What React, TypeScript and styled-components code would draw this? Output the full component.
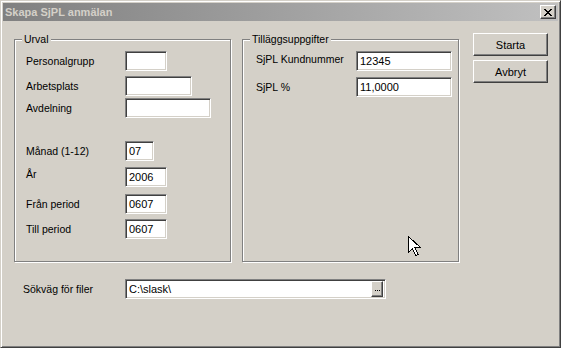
import React from 'react';
import styled, {createGlobalStyle} from "styled-components";

const GlobalStyle = createGlobalStyle`
    html, body {
        margin: 0;
        padding: 0;
        background: #d4d0c8;
    }
    * {
        box-sizing: border-box;
    }
`

type FieldType = {
    label: string
    value: string
    width: number
    top: number
    raise?: number
}

export default function App() {
    const urval: FieldType[] = [
        {label: 'Personalgrupp', value: '', width: 42, top: 0},
        {label: 'Arbetsplats', value: '', width: 67, top: 5},
        {label: 'Avdelning', value: '', width: 86, top: 2},
        {label: 'Månad (1-12)', value: '07', width: 29, top: 23},
        {label: 'År', value: '2006', width: 42, top: 6, raise: 3},
        {label: 'Från period', value: '0607', width: 42, top: 7},
        {label: 'Till period', value: '0607', width: 42, top: 5},
    ];

    const extra: FieldType[] = [
        {label: 'SjPL Kundnummer', value: '12345', width: 96, top: 0, raise: 2},
        {label: 'SjPL %', value: '11,0000', width: 96, top: 6},
    ];

    const renderFields = (fields: FieldType[], labelWidth: number) => fields.map(item => (
        <FieldRow key={item.label} $top={item.top} $labelWidth={labelWidth}>
            <FieldLabel $raise={item.raise || 0}>{item.label}</FieldLabel>
            <TextBox $width={item.width}>{item.value}</TextBox>
        </FieldRow>
    ));

    return (
        <>
            <GlobalStyle/>
            <Window>
                <TitleBar>
                    <TitleText>Skapa SjPL anmälan</TitleText>
                    <CloseButton>
                        <svg width="8" height="7" viewBox="0 0 8 7">
                            <path d="M0 0h2v1h1v1h2V1h1V0h2v1H7v1H6v1H5v1h1v1h1v1h1v1H6V6H5V5H3v1H2v1H0V6h1V5h1V4h1V3H2V2H1V1H0z"
                                  fill="#000"/>
                        </svg>
                    </CloseButton>
                </TitleBar>
                <Body>
                    <MainRow>
                        <GroupBox>
                            <Legend>Urval</Legend>
                            {renderFields(urval, 99)}
                        </GroupBox>
                        <GroupBox>
                            <Legend>Tilläggsuppgifter</Legend>
                            {renderFields(extra, 100)}
                        </GroupBox>
                        <ButtonColumn>
                            <PushButton>Starta</PushButton>
                            <PushButton>Avbryt</PushButton>
                        </ButtonColumn>
                    </MainRow>
                    <PathRow>
                        <PathLabel>Sökväg för filer</PathLabel>
                        <PathBox>
                            <PathText>C:\slask\</PathText>
                            <BrowseButton>
                                <Dot/><Dot/><Dot/>
                            </BrowseButton>
                        </PathBox>
                    </PathRow>
                </Body>
                <Cursor width="13" height="21" viewBox="0 0 13 21">
                    <path d="M0.5 0.5v16l4-4 3 7 2.5-1-3-7h5.5z" fill="#fff" stroke="#000" strokeWidth="1"
                          shapeRendering="crispEdges"/>
                </Cursor>
            </Window>
        </>
    );
}

const Window = styled.div`
    position: relative;
    width: 561px;
    height: 348px;
    background: #d4d0c8;
    border: 1px solid;
    border-color: #d4d0c8 #404040 #404040 #d4d0c8;
    box-shadow: inset 1px 1px 0 #fff, inset -1px -1px 0 #808080;
    padding: 2px;
    display: flex;
    flex-direction: column;
    font-family: "Liberation Sans", Arial, sans-serif;
    font-size: 10.5px;
    color: #000;
`

const TitleBar = styled.div`
    height: 18px;
    display: flex;
    align-items: center;
    justify-content: space-between;
    padding: 0 2px 0 2px;
    background: linear-gradient(to right, #808080, #c0c0c0);
`

const TitleText = styled.span`
    color: #d4d0c8;
    font-family: "Liberation Sans", Arial, sans-serif;
    font-size: 11px;
    font-weight: 700;
    line-height: 18px;
`

const CloseButton = styled.div`
    width: 16px;
    height: 14px;
    display: flex;
    align-items: center;
    justify-content: center;
    background: #d4d0c8;
    border: 1px solid;
    border-color: #fff #404040 #404040 #fff;
    box-shadow: inset -1px -1px 0 #808080;
    padding-right: 1px;
`

const Body = styled.div`
    flex: 1;
    padding: 12px 0 0 11px;
    display: flex;
    flex-direction: column;
`

const MainRow = styled.div`
    display: flex;
    align-items: flex-start;
`

const GroupBox = styled.div`
    position: relative;
    width: 217px;
    height: 223px;
    margin-top: 6px;
    margin-right: 11px;
    padding: 11px 0 0 11px;
    border: 1px solid #808080;
    box-shadow: 1px 1px 0 #fff, inset 1px 1px 0 #fff;
    display: flex;
    flex-direction: column;

    &:nth-child(2) {
        margin-right: 14px;
        padding-left: 13px;
    }
`

const Legend = styled.span`
    position: absolute;
    top: -7px;
    left: 7px;
    padding: 0 2px 0 2px;
    background: #d4d0c8;
    line-height: 13px;
`

const FieldRow = styled.div<{ $top: number, $labelWidth: number }>`
    display: grid;
    grid-template-columns: ${(props) => props.$labelWidth}px auto;
    align-items: center;
    height: 20px;
    margin-top: ${(props) => props.$top}px;
`

const FieldLabel = styled.span<{ $raise: number }>`
    white-space: nowrap;
    margin-top: ${(props) => -props.$raise * 2}px;
`

const TextBox = styled.div<{ $width: number }>`
    width: ${(props) => props.$width}px;
    height: 20px;
    background: #fff;
    border: 1px solid;
    border-color: #808080 #fff #fff #808080;
    box-shadow: inset 1px 1px 0 #404040, inset -1px -1px 0 #d4d0c8;
    padding: 1px 0 0 3px;
    line-height: 16px;
    font-size: 11px;
    white-space: nowrap;
    overflow: hidden;
`

const ButtonColumn = styled.div`
    display: flex;
    flex-direction: column;
    gap: 4px;
`

const PushButton = styled.div`
    width: 75px;
    height: 23px;
    display: flex;
    align-items: center;
    justify-content: center;
    border: 1px solid;
    border-color: #fff #404040 #404040 #fff;
    box-shadow: inset -1px -1px 0 #808080;
    font-size: 11px;
`

const PathRow = styled.div`
    display: flex;
    align-items: center;
    margin-top: 17px;
`

const PathLabel = styled.span`
    width: 111px;
    padding-left: 9px;
    white-space: nowrap;
`

const PathBox = styled.div`
    width: 261px;
    height: 20px;
    display: flex;
    align-items: center;
    justify-content: space-between;
    background: #fff;
    border: 1px solid;
    border-color: #808080 #fff #fff #808080;
    box-shadow: inset 1px 1px 0 #404040, inset -1px -1px 0 #d4d0c8;
    padding: 0 2px 0 3px;
    font-size: 11px;
`

const PathText = styled.span`
    line-height: 16px;
`

const BrowseButton = styled.div`
    width: 12px;
    height: 16px;
    display: flex;
    align-items: center;
    justify-content: center;
    gap: 1px;
    padding-top: 2px;
    background: #d4d0c8;
    border: 1px solid;
    border-color: #fff #404040 #404040 #fff;
    box-shadow: inset -1px -1px 0 #808080;
`

const Dot = styled.span`
    width: 1px;
    height: 1px;
    background: #000;
`

const Cursor = styled.svg`
    position: absolute;
    left: 407px;
    top: 235px;
`
